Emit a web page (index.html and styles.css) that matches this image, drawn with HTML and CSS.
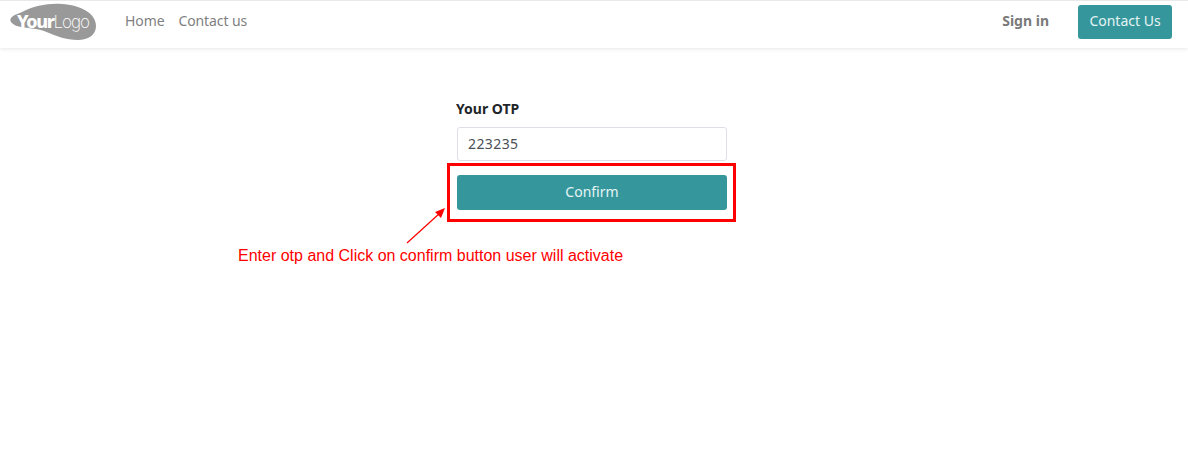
FILE: index.html
```html
<!DOCTYPE html>
<html lang="en">
<head>
<meta charset="utf-8">
<title>Your OTP</title>
<link rel="stylesheet" href="styles.css">
</head>
<body>
<header class="navbar">
  <a class="logo" href="#">
    <svg width="88" height="38" viewBox="0 0 88 38">
      <path d="M1 15C4 11 9 11 14 8C24 3 38 0 52 1C70 2 86 10 86 23C86 32 78 37 68 37C56 37 46 33 34 28C26 25 14 25 7 23C2 21 -1 18 1 15Z" fill="#999"/>
      <text class="logo-text" x="7" y="25"><tspan class="logo-your">Your</tspan><tspan class="logo-logo">Logo</tspan></text>
    </svg>
  </a>
  <nav class="nav-links">
    <a href="#">Home</a>
    <a href="#">Contact us</a>
  </nav>
  <div class="nav-right">
    <a class="signin" href="#">Sign in</a>
    <a class="btn btn-nav" href="#">Contact Us</a>
  </div>
</header>
<main class="content">
  <form class="otp-form">
    <label class="otp-label" for="otp">Your OTP</label>
    <input class="otp-input" id="otp" type="text" value="223235">
    <button class="btn btn-confirm" type="button">Confirm</button>
  </form>
</main>
<div class="highlight"></div>
<svg class="arrow" width="44" height="44" viewBox="0 0 44 44">
  <path d="M1 38L34 8" stroke="#f00" stroke-width="1.2" fill="none"/>
  <path d="M39 3L35 13L29 7Z" fill="#f00"/>
</svg>
<p class="note">Enter otp and Click on confirm button user will activate</p>
</body>
</html>
```
FILE: styles.css
```css
* { box-sizing: border-box; }
html, body { margin: 0; padding: 0; }
body {
  position: relative;
  height: 468px;
  overflow: hidden;
  background: #fff;
  font-family: "Noto Sans", "Open Sans", sans-serif;
  font-size: 14px;
  color: #212529;
}
a { text-decoration: none; }
.navbar {
  display: flex;
  align-items: center;
  height: 48px;
  padding: 0 16px 5px 10px;
  border-top: 1px solid #e9e9e9;
  background: #fff;
  box-shadow: 0 1px 4px rgba(0, 0, 0, 0.1);
}
.logo { display: flex; width: 88px; height: 38px; }
.logo-text { fill: #fff; font-size: 18px; }
.logo-your { font-family: "Noto Sans", sans-serif; font-weight: 800; letter-spacing: -1.4px; }
.logo-logo { font-family: "Inter", sans-serif; font-weight: 200; font-size: 17px; letter-spacing: -1px; }
.nav-links { display: flex; gap: 14px; margin-left: 27px; padding-bottom: 3px; }
.nav-links a { color: #7f7f7f; font-size: 14px; letter-spacing: -0.1px; }
.nav-right { display: flex; align-items: center; margin-left: auto; gap: 29px; }
.signin { color: #7a7a7a; font-weight: 700; font-size: 14px; padding-bottom: 3px; }
.btn {
  border: 0;
  border-radius: 3px;
  background: #35979c;
  color: #e6f4f4;
  font-family: inherit;
  font-size: 14px;
}
.btn-nav {
  display: flex;
  align-items: center;
  justify-content: center;
  width: 94px;
  height: 34px;
  padding-bottom: 3px;
}
.content { display: flex; justify-content: center; padding-top: 51px; }
.otp-form { display: flex; flex-direction: column; width: 270px; margin-right: 4px; }
.otp-label { font-weight: 700; font-size: 14px; line-height: 20px; margin-bottom: 8px; margin-left: -1px; }
.otp-input {
  width: 100%;
  height: 34px;
  padding: 0 10px 2px;
  border: 1px solid #dcdfe6;
  border-radius: 3px;
  font-family: inherit;
  font-size: 14px;
  color: #495057;
  letter-spacing: 0.4px;
  background: #fff;
}
.btn-confirm { width: 100%; height: 35px; margin-top: 14px; padding-bottom: 3px; }
.highlight {
  position: absolute;
  left: 447px;
  top: 163px;
  width: 289px;
  height: 59px;
  border: 3px solid #f00;
}
.arrow { position: absolute; left: 406px; top: 205px; }
.note {
  position: absolute;
  left: 238px;
  top: 247px;
  margin: 0;
  font-family: "Liberation Sans", Arial, sans-serif;
  font-size: 16px;
  line-height: 18px;
  color: #f00;
  white-space: nowrap;
}
```
